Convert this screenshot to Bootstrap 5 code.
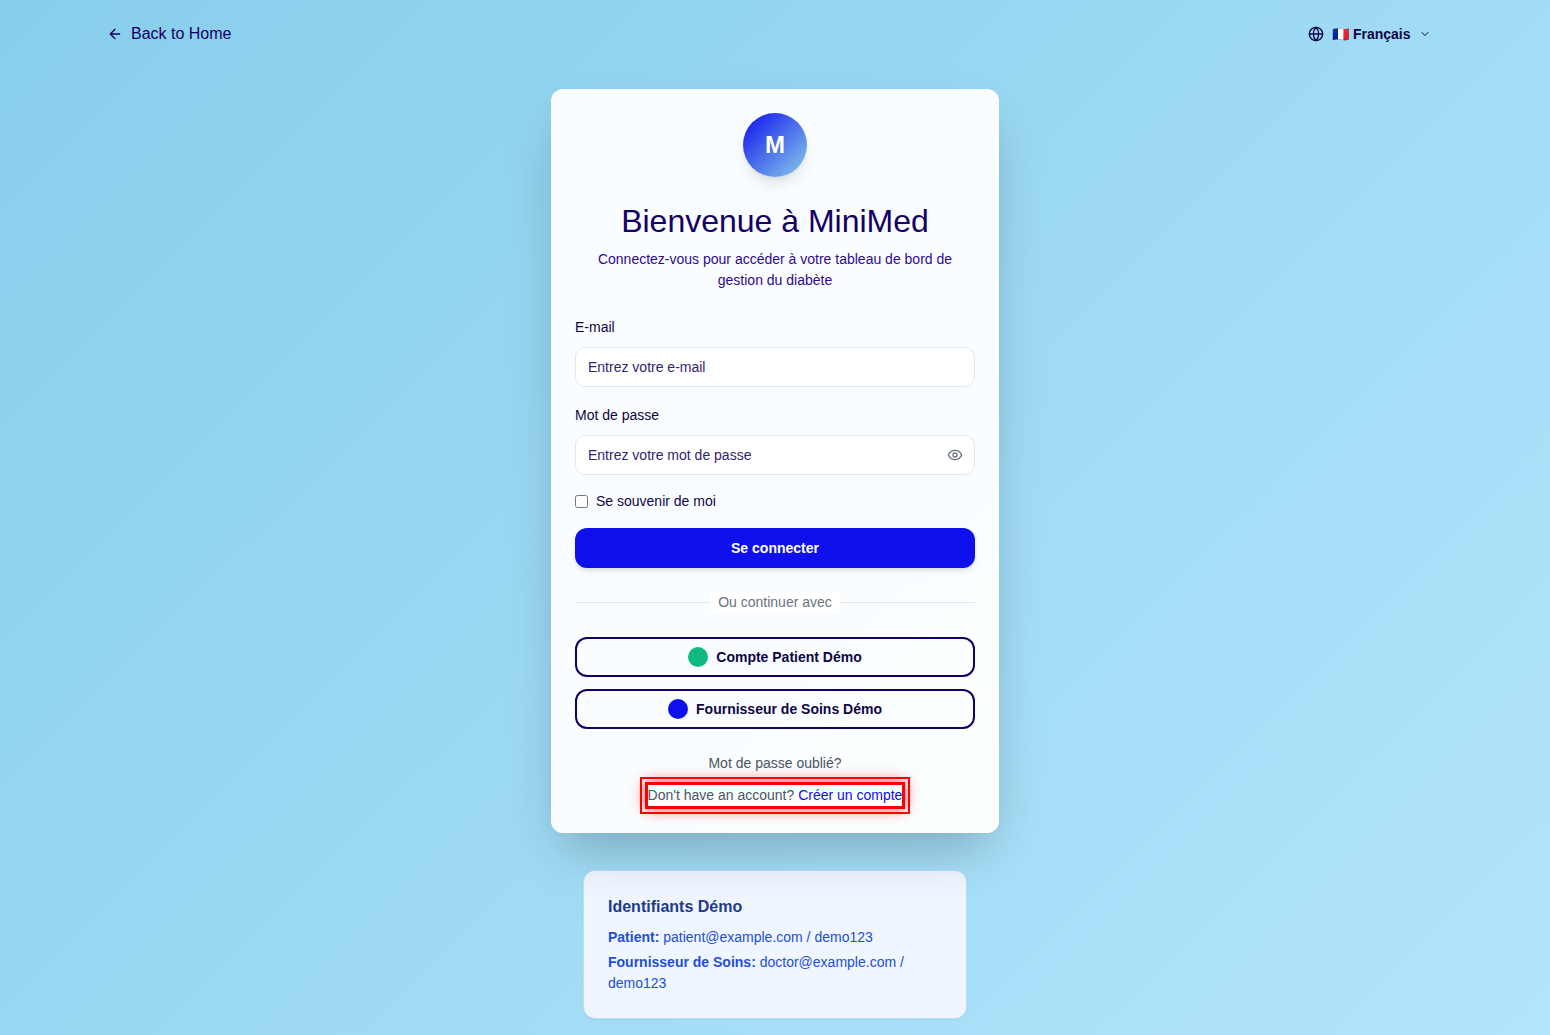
<!DOCTYPE html>
<html lang="fr">
<head>
<meta charset="utf-8">
<meta name="viewport" content="width=device-width, initial-scale=1">
<title>MiniMed – Connexion</title>
<link href="https://cdn.jsdelivr.net/npm/bootstrap@5.3.0/dist/css/bootstrap.min.css" rel="stylesheet">
<style>
:root { --ink: #0e0545; --navy: #140064; --blue: #0f0fec; }
body {
  font-family: "Liberation Sans", Arial, sans-serif;
  font-size: 14px;
  line-height: 21px;
  color: var(--ink);
  background: linear-gradient(135deg, #87ceeb 0%, #b3e5fc 100%);
}
a { text-decoration: none; }
.icon { fill: none; stroke: currentColor; stroke-width: 2; stroke-linecap: round; stroke-linejoin: round; flex: none; }
.topbar { max-width: 1400px; padding: 16px 32px; }
.back-link { font-size: 16px; line-height: 24px; color: var(--navy); }
.lang-picker { height: 36px; padding: 0 12px; color: var(--ink); }
.lang-picker select { appearance: none; border: 0; padding: 0; background: transparent; color: inherit; font-weight: 600; line-height: 21px; }
.login-area { max-width: 480px; padding: 21px 16px 16px; }
.login-card {
  z-index: 1;
  padding: 24px;
  border-radius: 12px;
  background: rgba(255, 255, 255, .95);
  box-shadow: 0 25px 50px -12px rgba(0, 0, 0, .25);
}
.brand-mark {
  width: 64px; height: 64px;
  font-size: 24px; line-height: 32px; font-weight: 700;
  background: linear-gradient(135deg, #0f0fec, #87ceeb);
  box-shadow: 0 10px 15px -3px rgba(0, 0, 0, .1), 0 4px 6px -4px rgba(0, 0, 0, .1);
}
.title { font-size: 32px; line-height: 40px; font-weight: 400; color: var(--navy); }
.subtitle { color: #2f0a8c; }
.field-label { line-height: 24px; }
.field { height: 40px; padding: 0 12px; font-size: 14px; border: 1px solid #dfe9ef; border-radius: 10px; color: var(--ink); background: #fff; }
.field::placeholder { color: #32246f; opacity: 1; }
.field-secret { padding-right: 40px; }
.eye { right: 0; width: 40px; height: 40px; color: #6b7280; }
.tick { width: 13px; height: 13px; }
.action { height: 40px; padding: 0 16px; font-size: 14px; font-weight: 600; border-radius: 12px; }
.action-main, .action-main:hover { color: #fff; background: var(--blue); border: 0; box-shadow: 0 4px 6px -1px rgba(0, 0, 0, .1), 0 2px 4px -2px rgba(0, 0, 0, .1); }
.action-line { color: var(--ink); border: 2px solid var(--navy); }
.demo-actions { gap: 12px; }
.dot { width: 20px; height: 20px; }
.dot-green { background: #10b981; }
.dot-blue { background: var(--blue); }
.rule { height: 1px; background: #e1e6ea; }
.rule-text { padding: 0 8px; background: #fff; color: #6b7280; }
.quiet, .quiet a:first-child { color: #4b5563; }
.signup {
  border: 3px solid #f00;
  outline: 2px solid #f00;
  outline-offset: 3px;
  box-shadow: 0 0 15px rgba(255, 0, 0, .7);
}
.signup a.signup-link { color: var(--blue); }
.demo-box {
  margin: 37px 32px 0;
  padding: 24px;
  border: 1px solid #bfdbfe;
  border-radius: 12px;
  background: #eff6ff;
  color: #1d4ed8;
  box-shadow: 0 1px 2px rgba(0, 0, 0, .05);
}
.demo-box h2 { font-size: 16px; line-height: 24px; font-weight: 600; color: #1e3a8a; }
</style>
</head>
<body class="min-vh-100">

<header class="topbar container-fluid d-flex align-items-center justify-content-between">
  <a href="#" class="back-link d-flex align-items-center gap-2">
    <svg class="icon" width="16" height="16" viewBox="0 0 24 24" aria-hidden="true"><path d="m12 19-7-7 7-7M19 12H5"/></svg>
    Back to Home
  </a>
  <label class="lang-picker d-flex align-items-center gap-2">
    <svg class="icon" width="16" height="16" viewBox="0 0 24 24" aria-hidden="true"><circle cx="12" cy="12" r="10"/><path d="M12 2a14.5 14.5 0 0 0 0 20 14.5 14.5 0 0 0 0-20M2 12h20"/></svg>
    <select aria-label="Langue"><option>🇫🇷 Français</option></select>
    <svg class="icon" width="12" height="12" viewBox="0 0 24 24" aria-hidden="true"><path d="m6 9 6 6 6-6"/></svg>
  </label>
</header>

<main class="login-area mx-auto">
  <section class="login-card position-relative">
    <div class="text-center mb-4">
      <div class="brand-mark rounded-circle d-flex align-items-center justify-content-center mx-auto mb-4 text-white">M</div>
      <h1 class="title mb-2">Bienvenue à MiniMed</h1>
      <p class="subtitle mb-0">Connectez-vous pour accéder à votre tableau de bord de gestion du diabète</p>
    </div>

    <form>
      <div class="mb-3">
        <label class="field-label d-block mb-2" for="email">E-mail</label>
        <input class="field form-control" id="email" type="email" placeholder="Entrez votre e-mail">
      </div>
      <div class="mb-3">
        <label class="field-label d-block mb-2" for="password">Mot de passe</label>
        <div class="position-relative d-flex">
          <input class="field field-secret form-control" id="password" type="password" placeholder="Entrez votre mot de passe">
          <button type="button" class="eye btn border-0 p-0 position-absolute top-0 d-flex align-items-center justify-content-center" aria-label="Afficher le mot de passe">
            <svg class="icon" width="16" height="16" viewBox="0 0 24 24" aria-hidden="true"><path d="M2 12s3-7 10-7 10 7 10 7-3 7-10 7-10-7-10-7Z"/><circle cx="12" cy="12" r="3"/></svg>
          </button>
        </div>
      </div>
      <div class="d-flex align-items-center gap-2 mb-3">
        <input class="tick m-0" id="remember" type="checkbox">
        <label for="remember">Se souvenir de moi</label>
      </div>
      <button type="submit" class="action action-main btn w-100 d-block">Se connecter</button>
    </form>

    <div class="d-flex align-items-center my-4">
      <div class="rule flex-fill"></div>
      <span class="rule-text">Ou continuer avec</span>
      <div class="rule flex-fill"></div>
    </div>

    <div class="demo-actions d-grid mb-4">
      <button type="button" class="action action-line btn d-flex align-items-center justify-content-center gap-2"><span class="dot dot-green rounded-circle"></span>Compte Patient Démo</button>
      <button type="button" class="action action-line btn d-flex align-items-center justify-content-center gap-2"><span class="dot dot-blue rounded-circle"></span>Fournisseur de Soins Démo</button>
    </div>

    <div class="quiet d-flex flex-column align-items-center gap-2">
      <a href="#">Mot de passe oublié?</a>
      <div class="signup">Don't have an account? <a href="#" class="signup-link">Créer un compte</a></div>
    </div>
  </section>

  <aside class="demo-box">
    <h2 class="mb-2">Identifiants Démo</h2>
    <p class="mb-1"><strong>Patient:</strong> patient@example.com / demo123</p>
    <p class="mb-0"><strong>Fournisseur de Soins:</strong> doctor@example.com / demo123</p>
  </aside>
</main>

<script src="https://cdn.jsdelivr.net/npm/bootstrap@5.3.0/dist/js/bootstrap.bundle.min.js"></script>
</body>
</html>
